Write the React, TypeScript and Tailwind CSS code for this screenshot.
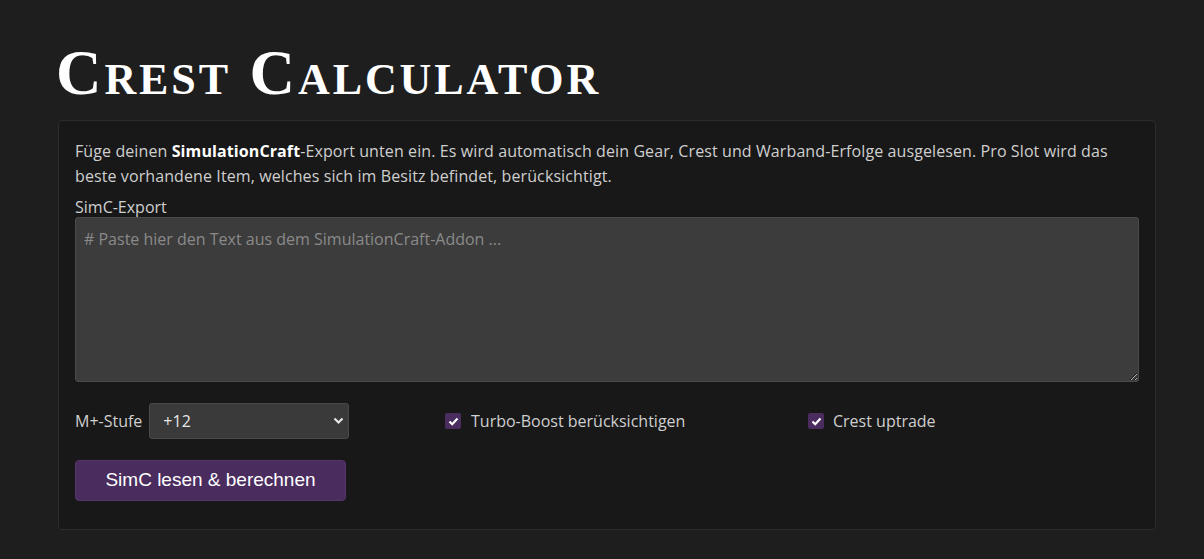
export default function App() {
  return (
    <div className="min-h-screen bg-[#1e1e1e] pl-[58px] pr-[48px] pt-[38px] pb-[30px] font-['Open_Sans',sans-serif]">
      <h1 className="-ml-[2px] font-['Liberation_Serif',serif] text-[63px] font-bold leading-[70px] text-white [font-variant:small-caps] tracking-[2.9px]">
        Crest Calculator
      </h1>

      <div className="mt-[12px] rounded-[4px] border border-[#2c2c2c] bg-[#181818] px-4 pt-[18px] pb-[28px]">
        <p className="text-[16px] leading-[25px] tracking-[0.1px] text-[#cfcfcf]">
          Füge deinen <b className="font-bold text-white">SimulationCraft</b>-Export unten ein. Es wird automatisch dein Gear, Crest und Warband-Erfolge ausgelesen. Pro Slot wird das
          <br />
          beste vorhandene Item, welches sich im Besitz befindet, berücksichtigt.
        </p>

        <label className="mt-[9px] block text-[16px] leading-[19px] text-[#cfcfcf]">SimC-Export</label>
        <textarea
          className="block h-[165px] w-full resize-y rounded-[3px] border border-[#4a4a4a] bg-[#3c3c3c] px-2 py-[9px] text-[16px] text-[#ddd] outline-none placeholder:text-[#8a8a8a]"
          placeholder="# Paste hier den Text aus dem SimulationCraft-Addon ..."
        />

        <div className="mt-[21px] grid grid-cols-[370px_363px_1fr] items-center">
          <div className="flex items-center gap-[7px]">
            <span className="text-[16px] text-[#cfcfcf]">M+-Stufe</span>
            <div className="relative">
              <select className="h-9 w-[200px] appearance-none rounded-[3px] border border-[#4a4a4a] bg-[#3a3a3a] pl-[13px] text-[16px] text-[#e6e6e6] outline-none">
                <option>+12</option>
              </select>
              <svg
                className="pointer-events-none absolute right-[5px] top-[14px]"
                width="11"
                height="8"
                viewBox="0 0 11 8"
              >
                <path d="M1.5 1.5 L5.5 5.5 L9.5 1.5" stroke="#e6e6e6" strokeWidth="2.2" fill="none" />
              </svg>
            </div>
          </div>

          <label className="flex items-center gap-[10px] text-[16px] text-[#cfcfcf]">
            <Check />
            Turbo-Boost berücksichtigen
          </label>

          <label className="flex items-center gap-[9px] text-[16px] text-[#cfcfcf]">
            <Check />
            Crest uptrade
          </label>
        </div>

        <button className="mt-[21px] h-[41px] w-[271px] rounded-[4px] border border-[#553569] bg-[#4a2c5e] font-['Liberation_Sans',sans-serif] text-[19px] text-white">
          SimC lesen &amp; berechnen
        </button>
      </div>
    </div>
  );
}

function Check() {
  return (
    <span className="flex h-4 w-4 items-center justify-center rounded-[2px] bg-[#4b2c5e]">
      <svg width="11" height="9" viewBox="0 0 11 9">
        <path d="M1.5 4.5 L4.2 7.2 L9.5 1.5" stroke="white" strokeWidth="2.2" fill="none" />
      </svg>
    </span>
  );
}
